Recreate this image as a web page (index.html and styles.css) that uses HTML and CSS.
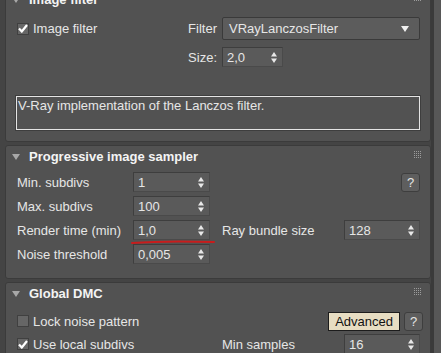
FILE: index.html
```html
<!DOCTYPE html>
<html lang="en">
  <head>
    <meta charset="UTF-8" />
    <meta name="viewport" content="width=device-width, initial-scale=1.0" />
    <title>Render settings</title>
    <link rel="stylesheet" href="styles.css">
  </head>
  <body>
    <div class="window">
      <div class="rollouts">
        <section class="rollout rollout-first">
          <div class="rollout-head">
            <svg class="tri" width="8" height="6" viewBox="0 0 8 6"><path d="M0 0H8L4 6Z" fill="#a8a8a8"/></svg>
            <span class="rollout-title">Image filter</span>
            <svg class="grip" width="9" height="8" viewBox="0 0 9 8"><g fill="#9c9c9c"><rect x="0" y="0" width="1" height="1"/><rect x="2" y="0" width="1" height="1"/><rect x="4" y="0" width="1" height="1"/><rect x="6" y="0" width="1" height="1"/><rect x="0" y="2" width="1" height="1"/><rect x="2" y="2" width="1" height="1"/><rect x="4" y="2" width="1" height="1"/><rect x="6" y="2" width="1" height="1"/><rect x="0" y="4" width="1" height="1"/><rect x="2" y="4" width="1" height="1"/><rect x="4" y="4" width="1" height="1"/><rect x="6" y="4" width="1" height="1"/><rect x="0" y="6" width="1" height="1"/><rect x="2" y="6" width="1" height="1"/><rect x="4" y="6" width="1" height="1"/><rect x="6" y="6" width="1" height="1"/></g></svg>
          </div>
          <div class="filter-body">
            <div class="filter-grid">
              <label class="check"><span class="box checked"><svg width="10" height="9" viewBox="0 0 10 9"><path d="M1 4.5L3.8 7.5L9 1" stroke="#fff" stroke-width="2.2" fill="none"/></svg></span>Image filter</label>
              <span class="field-label">Filter</span>
              <div class="dropdown">
                <span>VRayLanczosFilter</span>
                <svg width="8" height="6" viewBox="0 0 8 6"><path d="M0 0H8L4 6Z" fill="#f0f0f0"/></svg>
              </div>
              <span></span>
              <span class="field-label">Size:</span>
              <div class="spinner spinner-small">
                <span>2,0</span>
                <svg class="arrows" width="6" height="11" viewBox="0 0 6 11"><path d="M0 4.5H6L3 0Z M0 6.5H6L3 11Z" fill="#e8e8e8"/></svg>
              </div>
            </div>
            <div class="description">V-Ray implementation of the Lanczos filter.</div>
          </div>
        </section>

        <section class="rollout">
          <div class="rollout-head">
            <svg class="tri" width="8" height="6" viewBox="0 0 8 6"><path d="M0 0H8L4 6Z" fill="#a8a8a8"/></svg>
            <span class="rollout-title">Progressive image sampler</span>
            <svg class="grip" width="9" height="8" viewBox="0 0 9 8"><g fill="#9c9c9c"><rect x="0" y="0" width="1" height="1"/><rect x="2" y="0" width="1" height="1"/><rect x="4" y="0" width="1" height="1"/><rect x="6" y="0" width="1" height="1"/><rect x="0" y="2" width="1" height="1"/><rect x="2" y="2" width="1" height="1"/><rect x="4" y="2" width="1" height="1"/><rect x="6" y="2" width="1" height="1"/><rect x="0" y="4" width="1" height="1"/><rect x="2" y="4" width="1" height="1"/><rect x="4" y="4" width="1" height="1"/><rect x="6" y="4" width="1" height="1"/><rect x="0" y="6" width="1" height="1"/><rect x="2" y="6" width="1" height="1"/><rect x="4" y="6" width="1" height="1"/><rect x="6" y="6" width="1" height="1"/></g></svg>
          </div>
          <div class="rollout-body sampler-body">
            <span class="row-label">Min. subdivs</span>
            <div class="spinner"><span>1</span><svg class="arrows" width="6" height="11" viewBox="0 0 6 11"><path d="M0 4.5H6L3 0Z M0 6.5H6L3 11Z" fill="#e8e8e8"/></svg></div>
            <span></span><span></span>
            <button class="help">?</button>

            <span class="row-label">Max. subdivs</span>
            <div class="spinner"><span>100</span><svg class="arrows" width="6" height="11" viewBox="0 0 6 11"><path d="M0 4.5H6L3 0Z M0 6.5H6L3 11Z" fill="#e8e8e8"/></svg></div>
            <span></span><span></span><span></span>

            <span class="row-label">Render time (min)</span>
            <div class="spinner marked"><span>1,0</span><svg class="arrows" width="6" height="11" viewBox="0 0 6 11"><path d="M0 4.5H6L3 0Z M0 6.5H6L3 11Z" fill="#e8e8e8"/></svg>
              <svg class="underline" width="84" height="6" viewBox="0 0 84 6"><path d="M1 4C20 2.5 50 2 83 3" stroke="#c81c1c" stroke-width="2" fill="none" stroke-linecap="round"/></svg>
            </div>
            <span></span>
            <span class="row-label">Ray bundle size</span>
            <div class="spinner"><span>128</span><svg class="arrows" width="6" height="11" viewBox="0 0 6 11"><path d="M0 4.5H6L3 0Z M0 6.5H6L3 11Z" fill="#e8e8e8"/></svg></div>

            <span class="row-label">Noise threshold</span>
            <div class="spinner"><span>0,005</span><svg class="arrows" width="6" height="11" viewBox="0 0 6 11"><path d="M0 4.5H6L3 0Z M0 6.5H6L3 11Z" fill="#e8e8e8"/></svg></div>
          </div>
        </section>

        <section class="rollout">
          <div class="rollout-head">
            <svg class="tri" width="8" height="6" viewBox="0 0 8 6"><path d="M0 0H8L4 6Z" fill="#a8a8a8"/></svg>
            <span class="rollout-title">Global DMC</span>
            <svg class="grip" width="9" height="8" viewBox="0 0 9 8"><g fill="#9c9c9c"><rect x="0" y="0" width="1" height="1"/><rect x="2" y="0" width="1" height="1"/><rect x="4" y="0" width="1" height="1"/><rect x="6" y="0" width="1" height="1"/><rect x="0" y="2" width="1" height="1"/><rect x="2" y="2" width="1" height="1"/><rect x="4" y="2" width="1" height="1"/><rect x="6" y="2" width="1" height="1"/><rect x="0" y="4" width="1" height="1"/><rect x="2" y="4" width="1" height="1"/><rect x="4" y="4" width="1" height="1"/><rect x="6" y="4" width="1" height="1"/><rect x="0" y="6" width="1" height="1"/><rect x="2" y="6" width="1" height="1"/><rect x="4" y="6" width="1" height="1"/><rect x="6" y="6" width="1" height="1"/></g></svg>
          </div>
          <div class="rollout-body dmc-body">
            <label class="check span-3"><span class="box"></span>Lock noise pattern</label>
            <div class="dmc-buttons">
              <button class="advanced">Advanced</button>
              <button class="help">?</button>
            </div>

            <label class="check span-3"><span class="box checked"><svg width="10" height="9" viewBox="0 0 10 9"><path d="M1 4.5L3.8 7.5L9 1" stroke="#fff" stroke-width="2.2" fill="none"/></svg></span>Use local subdivs</label>
            <span class="row-label">Min samples</span>
            <div class="spinner"><span>16</span><svg class="arrows" width="6" height="11" viewBox="0 0 6 11"><path d="M0 4.5H6L3 0Z M0 6.5H6L3 11Z" fill="#e8e8e8"/></svg></div>
          </div>
        </section>
      </div>
      <div class="scrollbar"></div>
    </div>
  </body>
</html>
```

FILE: styles.css
```css
body {
  margin: 0;
  background-color: #444444;
  font-family: "Liberation Sans", Arial, sans-serif;
  font-size: 13px;
  color: #e6e6e6;
  overflow: hidden;
}

.window {
  display: flex;
  width: 441px;
  height: 353px;
  overflow: hidden;
}

.rollouts {
  width: 426px;
  padding-left: 5px;
}

.scrollbar {
  width: 7px;
  border-left: 3px solid #3a3a3a;
  background-color: #575757;
}

.rollout {
  background-color: #525252;
  border: 1px solid #3b3b3b;
  border-radius: 3px;
  margin-top: 3px;
}

.rollout-first {
  margin-top: -12px;
}

.rollout-head {
  display: flex;
  align-items: center;
  height: 21px;
  padding: 0 7px 0 6px;
}

.tri {
  margin-right: 9px;
}

.rollout-title {
  flex: 1;
  font-weight: bold;
  color: #f4f4f4;
}

.grip {
  margin-top: -4px;
}

.filter-body {
  padding: 7px 10px 11px 11px;
}

.filter-grid {
  display: grid;
  grid-template-columns: 1fr auto 198px;
  column-gap: 5px;
  row-gap: 7px;
  align-items: center;
}

.field-label {
  text-align: right;
}

.check {
  display: flex;
  align-items: center;
  gap: 4px;
}

.box {
  display: flex;
  align-items: center;
  justify-content: center;
  width: 10px;
  height: 10px;
  border: 1px solid #404040;
  background-color: #666666;
}

.dropdown {
  display: flex;
  align-items: center;
  justify-content: space-between;
  height: 21px;
  padding: 0 10px 0 6px;
  background-color: #5c5c5c;
  border: 1px solid #3a3a3a;
  border-radius: 2px;
}

.spinner {
  position: relative;
  display: flex;
  align-items: center;
  justify-content: space-between;
  height: 18px;
  padding: 0 4px 0 4px;
  background-color: #5a5a5a;
  border: 1px solid #3e3e3e;
  border-right-color: #4a4a4a;
  border-bottom-color: #4a4a4a;
}

.spinner-small {
  width: 51px;
}

.arrows {
  margin-right: 1px;
}

.underline {
  position: absolute;
  left: -3px;
  top: 18px;
}

.description {
  margin: 29px 0 0 -1px;
  height: 31px;
  padding: 1px 0 0 1px;
  border: 1px solid #e4e4e4;
  outline: 1px solid #3e3e3e;
}

.rollout-body {
  display: grid;
  grid-template-columns: 116px 77px 12px 122px 76px;
  grid-auto-rows: 20px;
  row-gap: 4px;
  align-items: center;
  padding: 0 10px 0 11px;
}

.sampler-body {
  padding-top: 5px;
  padding-bottom: 14px;
}

.dmc-body {
  padding-top: 7px;
  padding-bottom: 4px;
  row-gap: 3px;
}

.span-3 {
  grid-column: span 3;
}

.dmc-buttons {
  grid-column: span 2;
  display: flex;
  justify-content: flex-end;
  gap: 4px;
  margin-right: -3px;
}

.help {
  justify-self: end;
  width: 19px;
  height: 19px;
  padding: 0;
  font-family: inherit;
  font-size: 13px;
  color: #e6e6e6;
  background-color: #5e5e5e;
  border: 1px solid #3e3e3e;
  border-radius: 3px;
}

.advanced {
  height: 19px;
  padding: 0 6px;
  font-family: inherit;
  font-size: 13px;
  color: #111111;
  background-color: #e7ddc2;
  border: 1px solid #1c1c1c;
  border-radius: 0;
}
```
